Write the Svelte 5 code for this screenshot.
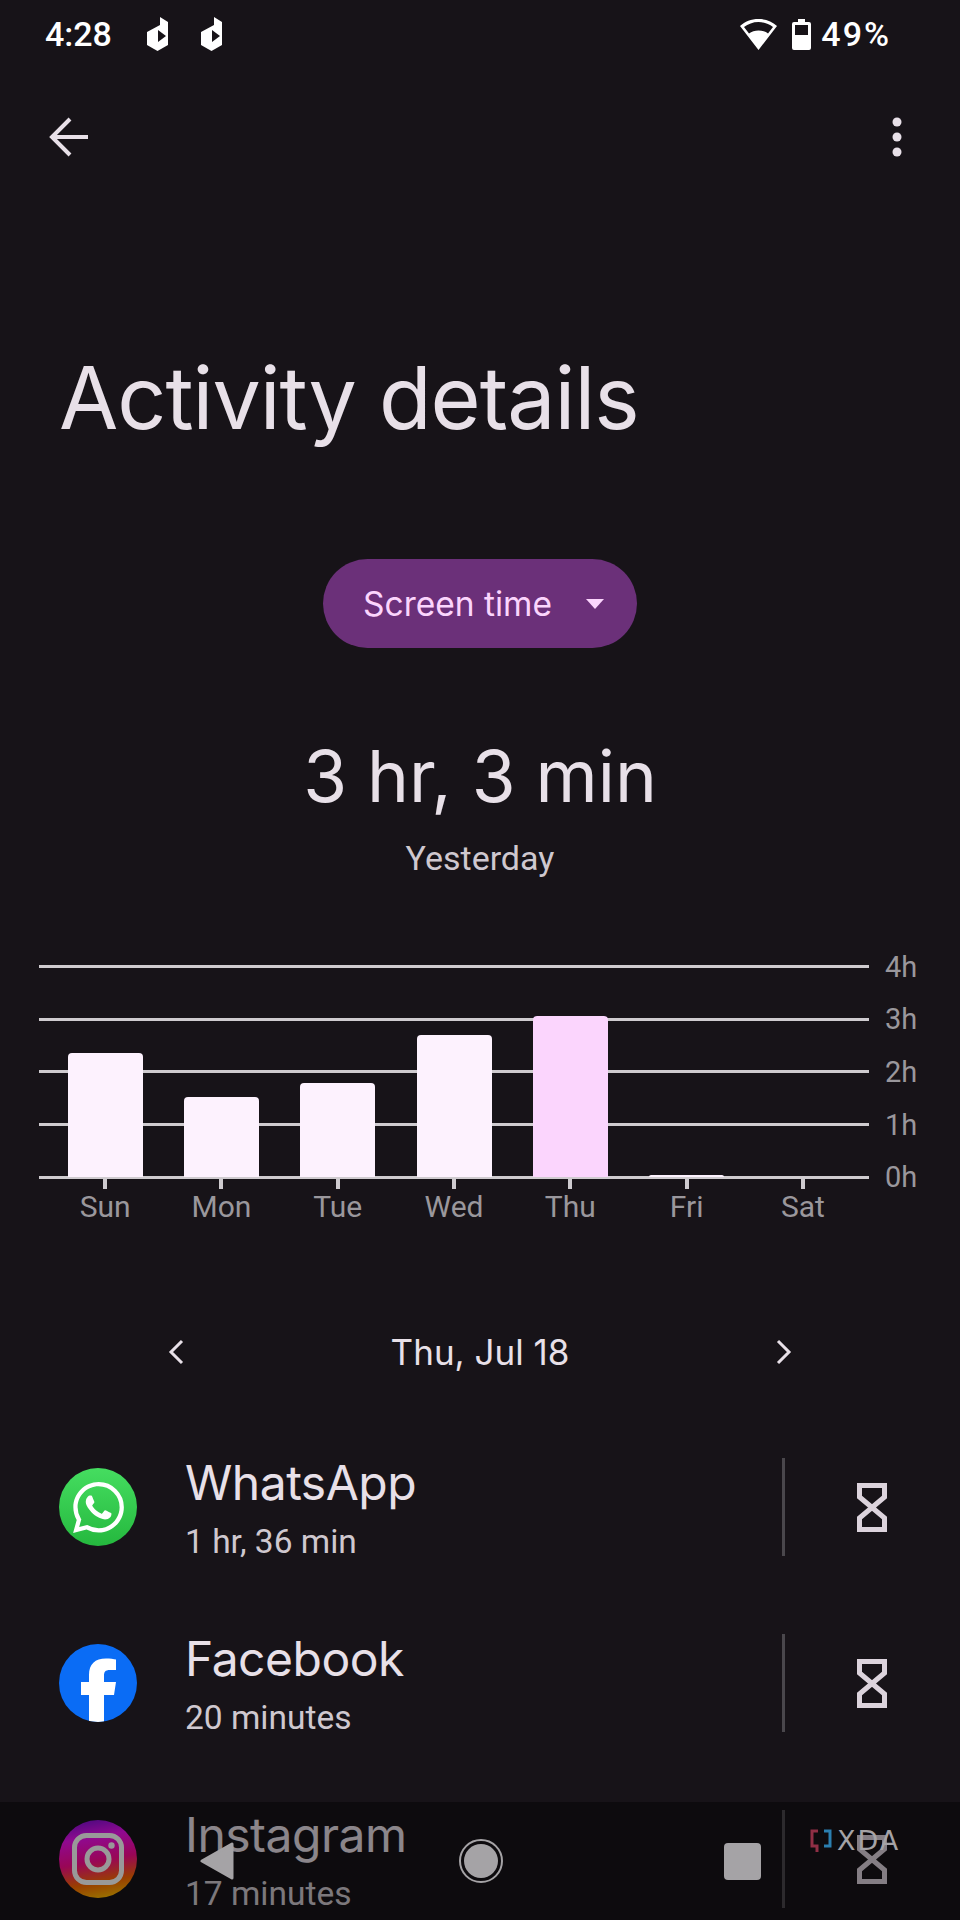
<script>
  const axis = ['4h', '3h', '2h', '1h', '0h'];

  // bar height in px above the 0h line
  const days = [
    { label: 'Sun', height: 124 },
    { label: 'Mon', height: 80 },
    { label: 'Tue', height: 94 },
    { label: 'Wed', height: 142 },
    { label: 'Thu', height: 161, active: true },
    { label: 'Fri', height: 2 },
    { label: 'Sat', height: 0 }
  ];

  const apps = [
    { name: 'WhatsApp', time: '1 hr, 36 min', icon: 'whatsapp' },
    { name: 'Facebook', time: '20 minutes', icon: 'facebook' },
    { name: 'Instagram', time: '17 minutes', icon: 'instagram' }
  ];
</script>

<div class="screen">
  <div class="statusbar">
    <div class="status-left">
      <span class="clock">4:28</span>
      <svg class="notif" width="21" height="34" viewBox="0 0 21 34"><path fill="#fff" fill-rule="evenodd" d="M13 0l8 5v23l-10.500 6L0 28V15l13-7zM11 13v12l8-6z"/></svg>
      <svg class="notif" width="21" height="34" viewBox="0 0 21 34"><path fill="#fff" fill-rule="evenodd" d="M13 0l8 5v23l-10.500 6L0 28V15l13-7zM11 13v12l8-6z"/></svg>
    </div>
    <div class="status-right">
      <svg class="wifi" width="37" height="31" viewBox="0 0 37 31"><path fill="#fff" fill-rule="evenodd" d="M18.500 0C11 0 5 2.500 0 7l18.500 24L37 7C32 2.500 26 0 18.500 0zM4 8c4-3 9-5 14.500-5S29 5 33 8l-5 6.500c-2.500-2-6-3-9.500-3s-7 1-9.500 3z"/></svg>
      <svg class="batt" width="19" height="31" viewBox="0 0 19 31"><path fill="#fff" fill-rule="evenodd" d="M6 0h7v3h4q2 0 2 2v24q0 2-2 2H2q-2 0-2-2V5q0-2 2-2h4zM3 6v10h13V6z"/></svg>
      <span class="battery">49%</span>
    </div>
  </div>

  <div class="toolbar">
    <svg width="40" height="40" viewBox="0 0 40 40" fill="none" stroke="#e8e0e8" stroke-width="4"><path d="M39 20H4M21 2L3 20l18 18"/></svg>
    <svg width="10" height="40" viewBox="0 0 10 40" fill="#e8e0e8"><circle cx="5" cy="5" r="4.500"/><circle cx="5" cy="20" r="4.500"/><circle cx="5" cy="35" r="4.500"/></svg>
  </div>

  <h1 class="title">Activity details</h1>

  <div class="pill-wrap">
    <button class="pill">
      <span>Screen time</span>
      <svg width="18" height="10" viewBox="0 0 18 10"><path fill="#fbd5fd" d="M0 0h18l-9 10z"/></svg>
    </button>
  </div>

  <div class="total">3 hr, 3 min</div>
  <div class="day">Yesterday</div>

  <div class="chart">
    <div class="grid">
      {#each axis as hour}
        <div class="grid-row">
          <div class="line"></div>
          <span class="hour">{hour}</span>
        </div>
      {/each}
    </div>
    <div class="bars">
      {#each days as d}
        <div class="slot">
          <div class="bar" class:active={d.active} style="height: {d.height}px"></div>
        </div>
      {/each}
    </div>
    <div class="days">
      {#each days as d}
        <div class="day-col">
          <div class="tick"></div>
          <span>{d.label}</span>
        </div>
      {/each}
    </div>
  </div>

  <div class="date-row">
    <svg width="16" height="26" viewBox="0 0 16 26" fill="none" stroke="#e8e0e8" stroke-width="3"><path d="M14 2L3 13l11 11"/></svg>
    <span>Thu, Jul 18</span>
    <svg width="16" height="26" viewBox="0 0 16 26" fill="none" stroke="#e8e0e8" stroke-width="3"><path d="M2 2l11 11L2 24"/></svg>
  </div>

  <div class="apps">
    {#each apps as app}
      <div class="app">
        <div class="app-icon {app.icon}">
          {#if app.icon === 'whatsapp'}
            <svg width="51" height="51" viewBox="0 0 24 24"><path fill="#fff" d="M17.472 14.382c-.297-.149-1.758-.867-2.03-.967-.273-.099-.471-.148-.67.15-.197.297-.767.966-.94 1.164-.173.199-.347.223-.644.075-.297-.15-1.255-.463-2.39-1.475-.883-.788-1.48-1.761-1.653-2.059-.173-.297-.018-.458.13-.606.134-.133.298-.347.446-.52.149-.174.198-.298.298-.497.099-.198.05-.371-.025-.52-.075-.149-.669-1.612-.916-2.207-.242-.579-.487-.5-.669-.51-.173-.008-.371-.01-.57-.01-.198 0-.52.074-.792.372-.272.297-1.04 1.016-1.04 2.479 0 1.462 1.065 2.875 1.213 3.074.149.198 2.096 3.2 5.077 4.487.709.306 1.262.489 1.694.625.712.227 1.36.195 1.871.118.571-.085 1.758-.719 2.006-1.413.248-.694.248-1.289.173-1.413-.074-.124-.272-.198-.57-.347m-5.421 7.403h-.004a9.87 9.87 0 01-5.031-1.378l-.361-.214-3.741.982.998-3.648-.235-.374a9.86 9.86 0 01-1.51-5.26c.001-5.45 4.436-9.884 9.888-9.884 2.64 0 5.122 1.03 6.988 2.898a9.825 9.825 0 012.893 6.994c-.003 5.45-4.437 9.884-9.885 9.884m8.413-18.297A11.815 11.815 0 0012.05 0C5.495 0 .16 5.335.157 11.892c0 2.096.547 4.142 1.588 5.945L.057 24l6.305-1.654a11.882 11.882 0 005.683 1.448h.005c6.554 0 11.89-5.335 11.893-11.893a11.821 11.821 0 00-3.48-8.413z"/></svg>
          {:else if app.icon === 'facebook'}
            <svg width="78" height="78" viewBox="0 0 78 78"><path fill="#fff" d="M30 78V51H22V38h8v-7c0-11 6-16.500 17-16.500 4 0 8 .5 10 1V26h-6c-5 0-6 2-6 6v6h12l-2 13H45v27z"/></svg>
          {:else}
            <svg width="52" height="52" viewBox="0 0 52 52" fill="none" stroke="#fff" stroke-width="5"><rect x="2.500" y="2.500" width="47" height="47" rx="12"/><circle cx="26" cy="26" r="11"/><circle cx="39.500" cy="12.500" r="3.200" fill="#fff" stroke="none"/></svg>
          {/if}
        </div>
        <div class="app-text">
          <div class="app-name">{app.name}</div>
          <div class="app-time">{app.time}</div>
        </div>
        <div class="divider"></div>
        <svg class="timer" width="30" height="49" viewBox="0 0 30 49" fill="none" stroke="#dcd3dc" stroke-width="5"><path d="M2.500 2.500h25V14L2.500 35v11.500h25V35L2.500 14z"/></svg>
      </div>
    {/each}
  </div>

  <div class="navbar">
    <svg class="nav-back" width="34" height="38" viewBox="0 0 34 38"><path fill="#a5a3a6" stroke="#a5a3a6" stroke-width="3" stroke-linejoin="round" d="M32 2v34L2 19z"/></svg>
    <svg class="nav-home" width="44" height="44" viewBox="0 0 44 44"><circle cx="22" cy="22" r="21" fill="none" stroke="#a5a3a6" stroke-width="2"/><circle cx="22" cy="22" r="17" fill="#a5a3a6"/></svg>
    <div class="nav-recent"></div>
    <div class="xda">
      <svg width="22" height="26" viewBox="0 0 22 26" fill="none" stroke-width="3"><path stroke="#8f2f45" d="M8 2H2v15h5v6"/><path stroke="#2b7fb0" d="M14 2h6v15h-6"/></svg>
      <span>XDA</span>
    </div>
  </div>
</div>

<style>
  :global(body) {
    margin: 0;
    background: #171318;
  }

  .screen {
    position: relative;
    width: 960px;
    height: 1920px;
    overflow: hidden;
    background: #171318;
    color: #e8e0e8;
    font-family: Roboto, sans-serif;
  }

  .statusbar {
    display: flex;
    justify-content: space-between;
    align-items: center;
    height: 68px;
    padding: 0 69px 0 45px;
    color: #fff;
    font-weight: 500;
  }

  .status-left,
  .status-right {
    display: flex;
    align-items: center;
  }

  .clock {
    width: 102px;
    font-size: 34px;
  }

  .notif {
    margin-right: 33px;
  }

  .wifi {
    margin-right: 15px;
  }

  .batt {
    margin-right: 10px;
  }

  .battery {
    font-size: 34px;
    letter-spacing: 2px;
  }

  .toolbar {
    display: flex;
    justify-content: space-between;
    align-items: center;
    height: 138px;
    padding: 0 58px 0 49px;
  }

  .title {
    margin: 0;
    padding: 144px 0 0 59px;
    font-family: Inter, sans-serif;
    font-size: 86px;
    font-weight: 400;
    letter-spacing: -1px;
    line-height: 96px;
  }

  .pill-wrap {
    display: flex;
    justify-content: center;
    padding-top: 113px;
  }

  .pill {
    display: flex;
    align-items: center;
    justify-content: space-between;
    box-sizing: border-box;
    width: 314px;
    height: 89px;
    padding: 0 33px 0 40px;
    border: 0;
    border-radius: 45px;
    background: #6b3079;
    color: #fbd5fd;
    font-family: Inter, sans-serif;
    font-size: 33.500px;
  }

  .total {
    padding-top: 86px;
    font-family: Inter, sans-serif;
    font-size: 71px;
    font-weight: 400;
    line-height: 84px;
    text-align: center;
  }

  .day {
    padding-top: 20px;
    color: #cfc8cf;
    font-size: 34px;
    line-height: 40px;
    text-align: center;
  }

  .chart {
    position: relative;
    height: 357px;
    margin-top: 87px;
  }

  .grid {
    display: flex;
    flex-direction: column;
    gap: 49.700px;
    padding-left: 39px;
  }

  .grid-row {
    display: flex;
    align-items: center;
    height: 3px;
  }

  .line {
    width: 830px;
    height: 3px;
    background: #cfcbcf;
  }

  .hour {
    margin-left: 16px;
    color: #9a979c;
    font-size: 29px;
  }

  .bars {
    position: absolute;
    top: 0;
    left: 47px;
    display: flex;
    align-items: flex-end;
    height: 212px;
  }

  .slot {
    display: flex;
    justify-content: center;
    align-items: flex-end;
    width: 116.300px;
    height: 100%;
  }

  .bar {
    width: 75px;
    border-radius: 4px 4px 0 0;
    background: #fdf2fe;
  }

  .bar.active {
    background: #fbd5fd;
  }

  .days {
    position: absolute;
    top: 212px;
    left: 0;
    display: flex;
    padding-left: 47px;
  }

  .day-col {
    display: flex;
    flex-direction: column;
    align-items: center;
    width: 116.300px;
    color: #9a979c;
    font-size: 30px;
    line-height: 35px;
  }

  .tick {
    width: 4px;
    height: 12px;
    background: #cfcbcf;
  }

  .date-row {
    display: flex;
    justify-content: space-between;
    align-items: center;
    box-sizing: border-box;
    height: 60px;
    padding: 0 168px;
    font-family: Inter, sans-serif;
    font-size: 35px;
  }

  .apps {
    padding-top: 37px;
  }

  .app {
    display: flex;
    align-items: center;
    height: 176px;
    padding-left: 59px;
  }

  .app-icon {
    display: flex;
    align-items: center;
    justify-content: center;
    flex: none;
    width: 78px;
    height: 78px;
    border-radius: 50%;
  }

  .whatsapp {
    background: linear-gradient(#45dd60, #25b83e);
  }

  .facebook {
    overflow: hidden;
    background: #0a6cf5;
  }

  .instagram {
    background: linear-gradient(170deg, #6a10d0 0%, #f010f0 25%, #ff0a90 52%, #ff6a00 76%, #ffd800 100%);
  }

  .app-text {
    width: 597px;
    padding: 2px 0 0 48px;
    box-sizing: content-box;
  }

  .app-name {
    font-family: Inter, sans-serif;
    font-size: 48px;
    font-weight: 400;
    letter-spacing: -0.500px;
    line-height: 56px;
  }

  .app-time {
    padding-top: 11px;
    color: #cfc8cf;
    font-size: 33.500px;
    line-height: 40px;
  }

  .divider {
    flex: none;
    width: 3px;
    height: 98px;
    background: #4a474c;
  }

  .timer {
    margin-left: 72px;
  }

  .navbar {
    position: absolute;
    left: 0;
    right: 0;
    bottom: 0;
    display: flex;
    align-items: center;
    height: 118px;
    background: rgba(0, 0, 0, 0.4);
  }

  .nav-back {
    margin-left: 200px;
  }

  .nav-home {
    margin-left: 225px;
  }

  .nav-recent {
    width: 37px;
    height: 37px;
    margin-left: 221px;
    border-radius: 4px;
    background: #a5a3a6;
  }

  .xda {
    position: absolute;
    top: 27px;
    left: 810px;
    display: flex;
    align-items: flex-start;
    gap: 5px;
    color: #a5a3a6;
    font-family: "DejaVu Sans", sans-serif;
    font-size: 27px;
    line-height: 24px;
    letter-spacing: 2px;
  }
</style>
